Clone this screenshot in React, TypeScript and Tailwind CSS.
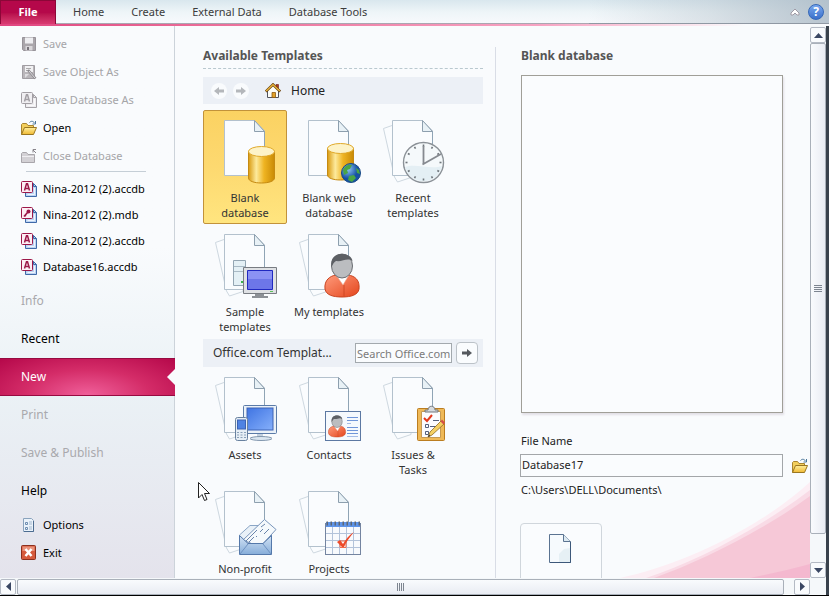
import { useState, type ReactNode } from "react";

interface Template {
  label: string;
  art: ReactNode;
}

const TABS = ["Home", "Create", "External Data", "Database Tools"];

function Page({ stacked = true }: { stacked?: boolean }) {
  return (
    <>
      {stacked && <path d="M11 5.5L2.5 8.5L13.5 57L16.5 62L30 57.5V10Z" fill="#fafcfe" stroke="#ced8e0" />}
      <path d="M11.5 .5H41.5L51.5 11V55.5H11.5Z" fill="#fafcfe" stroke="#b3c1cd" />
      <path d="M51.5 11V55" stroke="#8fa4b5" />
      <path d="M41.5 .5V11.5H51.5Z" fill="#e8f1f6" stroke="#8d9fae" />
    </>
  );
}

function Cylinder({ x, y }: { x: number; y: number }) {
  return (
    <g transform={`translate(${x} ${y})`}>
      <path d="M.5 5V32C.5 35 6 37 13.5 37S26.5 35 26.5 32V5Z" fill="url(#gold)" stroke="#c58a12" />
      <ellipse cx="13.5" cy="5.5" rx="13" ry="5" fill="#fdf3c8" stroke="#e0a92a" />
    </g>
  );
}

function Person({ x, y, scale = 1 }: { x: number; y: number; scale?: number }) {
  return (
    <g transform={`translate(${x} ${y}) scale(${scale})`}>
      <path d="M1 36C0 27 6 23 12 22L18 25L24 22C31 23 36 27 35 36C34 42 27 44 18 44S2 42 1 36Z" fill="url(#shirt)" stroke="#c9431f" />
      <path d="M12 22L19 32L25 22Z" fill="#fff" stroke="#e9a58d" strokeWidth=".6" />
      <path d="M20 32V43" stroke="#c9431f" strokeWidth=".8" />
      <ellipse cx="18" cy="13" rx="10.5" ry="12" fill="#bbbdc0" stroke="#6a6d72" />
      <path d="M7.5 14C6 5 11 1 18 1C24 1 28 4 28.5 8C23 4 19 9 12 8C10 9 9 11 7.5 14Z" fill="#5d6065" />
    </g>
  );
}

function Defs() {
  return (
    <svg className="absolute size-0" aria-hidden="true">
      <defs>
        <linearGradient id="gold">
          <stop offset="0" stopColor="#d99a10" />
          <stop offset=".3" stopColor="#fdea9c" />
          <stop offset=".6" stopColor="#efb422" />
          <stop offset="1" stopColor="#c98a05" />
        </linearGradient>
        <linearGradient id="shirt" x1="0" x2="1" y2="1">
          <stop offset="0" stopColor="#ff9b7c" />
          <stop offset="1" stopColor="#e4451c" />
        </linearGradient>
        <linearGradient id="screen" x2="1" y2="1">
          <stop offset="0" stopColor="#3f74e2" />
          <stop offset="1" stopColor="#86b0fb" />
        </linearGradient>
        <linearGradient id="folder" x2="0" y2="1">
          <stop offset="0" stopColor="#ffef9e" />
          <stop offset="1" stopColor="#f0b932" />
        </linearGradient>
        <linearGradient id="envelope" x2="0" y2="1">
          <stop offset="0" stopColor="#d3e3f5" />
          <stop offset="1" stopColor="#86add9" />
        </linearGradient>
        <radialGradient id="globe" cx=".35" cy=".3">
          <stop offset="0" stopColor="#8fc6f4" />
          <stop offset="1" stopColor="#1551a4" />
        </radialGradient>
      </defs>
    </svg>
  );
}

function Art({ children }: { children: ReactNode }) {
  return (
    <svg width="64" height="64" viewBox="0 0 64 64" fill="none" aria-hidden="true">
      {children}
    </svg>
  );
}

const clockTicks = [0, 30, 60, 90, 120, 150, 180, 210, 240, 270, 300, 330];

const localTemplates: Template[] = [
  {
    label: "Blank database",
    art: (
      <Art>
        <Page stacked={false} />
        <Cylinder x={35} y={26} />
      </Art>
    ),
  },
  {
    label: "Blank web database",
    art: (
      <Art>
        <Page stacked={false} />
        <Cylinder x={30} y={23} />
        <circle cx="54" cy="53" r="9.5" fill="url(#globe)" stroke="#174a86" />
        <path d="M46 50C48 45 52 44 55 45L53 49L50 50L51 53L47 55ZM52 56L57 55L59 58L55 62L51 60ZM59 48L62 50L63 54L60 53Z" fill="#4aa545" />
      </Art>
    ),
  },
  {
    label: "Recent templates",
    art: (
      <Art>
        <Page />
        <circle cx="42.5" cy="42.5" r="20" fill="#f5f9fb" stroke="#8b9197" strokeWidth="1.4" />
        <path d="M24 47C34 43 50 50 61 46A19 19 0 0 1 24 47Z" fill="#e4eff4" />
        {clockTicks.map((angle) => (
          <path key={angle} d="M42.5 24.5V26.5" stroke="#6f757b" strokeWidth="1.6" transform={`rotate(${angle} 42.5 42.5)`} />
        ))}
        <path d="M42.5 26V44M41.5 44.5L60 34" stroke="#868a90" strokeWidth="1.8" />
      </Art>
    ),
  },
  {
    label: "Sample templates",
    art: (
      <Art>
        <Page />
        <path d="M20.5 26.5H32.5V51.5H20.5Z" fill="#e4f0f5" stroke="#93a5b2" />
        <path d="M21 32.5H32M21 37.5H32" stroke="#a9bac5" />
        <path d="M28 48H31" stroke="#39b54a" strokeWidth="2" />
        <path d="M30.5 33.5H63.5V59.5H30.5Z" fill="#dfe1e4" stroke="#787c82" />
        <path d="M34.5 36.5H59.5V55.5H34.5Z" fill="#6d76e8" stroke="#2028c0" />
        <path d="M35 37H59V45H35Z" fill="#8b92f4" />
        <path d="M42 60H51V62H42ZM39 62H55V64H39Z" fill="#8c9096" />
        <path d="M57 57.5H60" stroke="#5cc05c" />
      </Art>
    ),
  },
  {
    label: "My templates",
    art: (
      <Art>
        <Page />
        <Person x={27} y={19} />
      </Art>
    ),
  },
];

const onlineTemplates: Template[] = [
  {
    label: "Assets",
    art: (
      <Art>
        <Page />
        <rect x="30.5" y="28.5" width="33" height="28" rx="1" fill="#eaf1f8" stroke="#5b7ba8" />
        <rect x="34" y="31" width="26" height="22" fill="url(#screen)" stroke="#3c62b4" />
        <path d="M44 57H50V61H44Z" fill="#c3d0de" />
        <ellipse cx="48" cy="61.5" rx="11" ry="2" fill="#dbe6f0" stroke="#8297ae" />
        <rect x="22.5" y="40.5" width="12" height="23" rx="2" fill="#e6eef5" stroke="#68819f" />
        <rect x="24.5" y="43" width="8" height="9" fill="#4f83e3" stroke="#3c62b4" />
        <path d="M24 55.5H33M24 58H33M24 60.5H33" stroke="#8aa0b8" strokeDasharray="2 1.5" />
      </Art>
    ),
  },
  {
    label: "Contacts",
    art: (
      <Art>
        <Page />
        <rect x="28.5" y="34.5" width="35" height="29" fill="#f5f9fd" stroke="#5c78a2" />
        <Person x={31} y={38} scale={0.5} />
        <path d="M50 40.5H61M50 43.5H61M50 50.5H61M50 53.5H61M50 56.5H61" stroke="#6f95d8" />
        <path d="M50 46.5H54M50 59.5H61" stroke="#a4bce6" />
      </Art>
    ),
  },
  {
    label: "Issues & Tasks",
    art: (
      <Art>
        <Page />
        <rect x="36.5" y="31.5" width="27" height="32" rx="1" fill="#efb958" stroke="#bb7d20" />
        <path d="M40.5 34.5H59.5V60.5H40.5Z" fill="#fbfcfe" stroke="#c69a53" />
        <path d="M44 35V33H47C47 28 54 28 54 33H57V35Z" fill="#d6dade" stroke="#73777c" />
        <path d="M43 41L46 44L51 38" stroke="#e2391d" strokeWidth="2" />
        <path d="M52 43.5H58M49 49.5H55" stroke="#55617c" />
        <path d="M44.5 47.5H47.5V50.5H44.5ZM44.5 54.5H47.5V57.5H44.5Z" stroke="#55617c" />
        <path d="M47 60L49 55L60 44L63 47L51 58Z" fill="#f4d063" stroke="#8e6a23" strokeWidth=".8" />
        <path d="M59.5 44.5L61 42.5L64 45.5L62.5 47.5Z" fill="#d65048" />
        <path d="M47 60L48 57.5L49.5 59Z" fill="#333" />
      </Art>
    ),
  },
  {
    label: "Non-profit",
    art: (
      <Art>
        <Page />
        <path d="M26.5 44L37 34.5H48L58.5 44V52H26.5Z" fill="#e9f1f8" stroke="#8ba6c6" />
        <path d="M30 49L51.5 28.5L63 38.5L47 56Z" fill="#f5f9fc" stroke="#7995bb" />
        <path d="M33 50L44 39M36 51L41 46M48 36L52 33M47 41L50 38M51 43L56 38M43 46L44 45" stroke="#6883aa" />
        <path d="M26.5 44.5L35 52.5H50L58.5 44.5V63.5H26.5Z" fill="url(#envelope)" stroke="#5478aa" />
        <path d="M27 63L35 53M58 63L50 53" stroke="#6e92c2" />
      </Art>
    ),
  },
  {
    label: "Projects",
    art: (
      <Art>
        <Page />
        <rect x="28.5" y="32.5" width="35" height="31" fill="#f8fafd" stroke="#7484a0" />
        <path d="M29 31H63V36H29Z" fill="#5e94e8" />
        <path d="M29.5 32.5H63" stroke="#5d6673" strokeWidth="4" strokeDasharray="1.5 2.5" />
        <path d="M29 42.5H63M29 49.5H63M29 56.5H63M35.5 36V63M42.5 36V63M49.5 36V63M56.5 36V63" stroke="#b3c3da" />
        <path d="M43 50H49V56.5H43Z" stroke="#ee6b4c" />
        <path d="M40 51L43 49L46 53C49 48 52 44 57 41C53 46 49 51 47 56H45Z" fill="#ee4a29" />
      </Art>
    ),
  },
];

function SmallIcon({ children }: { children: ReactNode }) {
  return (
    <svg className="shrink-0" width="16" height="16" viewBox="0 0 16 16" fill="none" aria-hidden="true">
      {children}
    </svg>
  );
}

function SaveIcon() {
  return (
    <SmallIcon>
      <path d="M1.5 1.5H14.5V14.5H2.5L1.5 13.5Z" fill="#aaa6ab" stroke="#979399" />
      <path d="M4 1.5H12V7.5H4Z" fill="#eeeef1" />
      <path d="M4.5 10H11.5V14.5H4.5Z" fill="#d9d7da" />
      <path d="M6 11H8V14H6Z" fill="#77737a" />
    </SmallIcon>
  );
}

function SaveObjectIcon() {
  return (
    <SmallIcon>
      <path d="M1.5 1.5H13.5V14.5H1.5Z" fill="#b9b6ba" stroke="#a09da2" />
      <path d="M4 2H12V8H4Z" fill="#f1f1f3" />
      <path d="M5 4.5H10M5 6.5H8" stroke="#aaa" />
      <path d="M4 14V10H8" fill="#dedde0" />
      <path d="M7 6L14.5 14.5" stroke="#8e8b90" strokeWidth="2.5" />
      <path d="M8 7L14 14" stroke="#dddce0" />
    </SmallIcon>
  );
}

function AccessIcon({ muted = false, legacy = false }: { muted?: boolean; legacy?: boolean }) {
  const sheet = muted ? "#a5a2a7" : "#3f69a8";
  const badge = muted ? "#a29fa4" : "#9c1849";
  return (
    <SmallIcon>
      <path d="M8.5 2.5H12.5L15.5 5.5V15.5H4.5V11" fill={muted ? "#eeedf0" : "#bcd4f3"} stroke={sheet} />
      <path d="M12.5 2.5V5.5H15.5" stroke={sheet} />
      <path d="M6.5 13.5H13.5V7" stroke={muted ? "#fafafb" : "#eef5fd"} />
      <rect x=".5" y=".5" width="11" height="11" rx="1" fill={muted ? "#f0eff2" : "#fdeff5"} stroke={badge} />
      {legacy ? (
        <>
          <circle cx="7.5" cy="4.5" r="2" fill={badge} />
          <path d="M6.5 5.5L3 9.5M3.5 8L5 9" stroke={badge} strokeWidth="1.6" />
        </>
      ) : (
        <path d="M3.5 9.5L5.5 2.8H6.5L8.5 9.5M4 7.5H8" stroke={badge} strokeWidth="1.5" />
      )}
    </SmallIcon>
  );
}

function OpenIcon() {
  return (
    <SmallIcon>
      <path d="M.5 14.5V4.5L1.5 3.5H5.5L7 5.5H12.5V8" fill="#f3cf5c" stroke="#a9842e" />
      <path d="M.5 14.5L3.5 7.5H15.5L12.5 14.5Z" fill="url(#folder)" stroke="#9a7620" />
      <path d="M8.5 2.5C10 .8 12 .8 13.5 3M14.5 1V4H11.5" stroke="#4a7699" />
    </SmallIcon>
  );
}

function CloseDatabaseIcon() {
  return (
    <SmallIcon>
      <path d="M.5 14.5V5.5L1.5 4.5H5.5L7 6.5H13.5V14.5Z" fill="#d3d1d5" stroke="#a9a6ab" />
      <path d="M1 8.5H13" stroke="#f0eff2" />
      <path d="M15 5L12 2M12 4.5V1.5H15" stroke="#88848b" />
    </SmallIcon>
  );
}

function OptionsIcon() {
  return (
    <SmallIcon>
      <path d="M2.5 1.5H10.5L12.5 3.5V14.5H2.5Z" fill="#eaf2fa" stroke="#8aa3bd" />
      <path d="M12.5 4V14.5H3" stroke="#4c6c90" />
      <path d="M4.5 5.5H6.5V7.5H4.5ZM4.5 10.5H6.5V12.5H4.5Z" stroke="#6d8cb0" />
      <path d="M8 5H11M8 7H11M8 10H11M8 12H11" stroke="#a3b8cf" />
    </SmallIcon>
  );
}

function ExitIcon() {
  return (
    <SmallIcon>
      <rect x=".5" y=".5" width="14" height="14" rx="1" fill="#d65a3c" stroke="#8c2f1d" />
      <path d="M1.5 1.5H13.5V6H1.5Z" fill="#e9917a" />
      <path d="M4.5 4L10.5 11M10.5 4L4.5 11" stroke="#fff" strokeWidth="2.5" />
    </SmallIcon>
  );
}

function HomeIcon() {
  return (
    <SmallIcon>
      <path d="M11 1.5H13.5V6H11Z" fill="#b03a22" stroke="#6c2415" strokeWidth=".6" />
      <path d="M2.5 7V14.5H13.5V7L8 2Z" fill="#fdfdf6" stroke="#50535b" />
      <path d="M7 9.5H10.5V14.5H7Z" fill="#e3a126" stroke="#8b5a14" strokeWidth=".8" />
      <path d="M.8 8.5L8 1.5L15.2 8.5" stroke="#6a4513" strokeWidth="2.6" />
      <path d="M1.2 8L8 1.5L14.8 8" stroke="#f0b93a" strokeWidth="1.2" />
    </SmallIcon>
  );
}

function ArrowGlyph({ direction, className }: { direction: "left" | "right"; className: string }) {
  return (
    <svg width="10" height="8" viewBox="0 0 10 8" className={className} aria-hidden="true">
      <path
        d={direction === "left" ? "M0 4L5 0V2.5H10V5.5H5V8Z" : "M10 4L5 0V2.5H0V5.5H5V8Z"}
        fill="currentColor"
      />
    </svg>
  );
}

const commands = [
  { label: "Save", icon: <SaveIcon />, disabled: true },
  { label: "Save Object As", icon: <SaveObjectIcon />, disabled: true },
  { label: "Save Database As", icon: <AccessIcon muted />, disabled: true },
  { label: "Open", icon: <OpenIcon />, disabled: false },
  { label: "Close Database", icon: <CloseDatabaseIcon />, disabled: true },
];

const recentFiles = [
  { name: "Nina-2012 (2).accdb", legacy: false },
  { name: "Nina-2012 (2).mdb", legacy: true },
  { name: "Nina-2012 (2).accdb", legacy: false },
  { name: "Database16.accdb", legacy: false },
];

const places = [
  { label: "Info", disabled: true },
  { label: "Recent", disabled: false },
  { label: "New", disabled: false },
  { label: "Print", disabled: true },
  { label: "Save & Publish", disabled: true },
  { label: "Help", disabled: false },
];

function Ribbon() {
  return (
    <header className="shrink-0">
      <div className="flex h-6 items-stretch bg-linear-to-b from-[#d9e7ee] via-[#eef5f8] to-[#f8fafd]">
        <button className="w-14 border border-b-0 border-[#8c0738] bg-linear-to-b from-[#b5084a] from-50% to-[#d93a72] text-[11px] font-bold text-white">
          File
        </button>
        <nav className="flex flex-1 items-center gap-[27px] border-b border-[#aaa6b1] pt-px pl-[17px] text-[11px] text-[#3c3c3c]">
          {TABS.map((tab) => (
            <button key={tab}>{tab}</button>
          ))}
        </nav>
        <div className="flex w-60 items-center justify-end gap-2 border-b border-[#8f98a3] bg-linear-to-r from-[#b4c1cb]/0 via-[#b4c1cb]/40 to-[#a9b8c4]/80 pr-[5px]">
          <button aria-label="Minimize the Ribbon">
            <svg width="10" height="8" viewBox="0 0 10 8" aria-hidden="true">
              <path d="M1 5L5 1L9 5V7H7L5 5L3 7H1Z" fill="#fff" stroke="#a09ba6" />
            </svg>
          </button>
          <button
            aria-label="Help"
            className="size-4 rounded-full border border-[#3568b8] bg-linear-to-b from-[#79a8ee] to-[#3a6fca] text-xs leading-none font-bold text-white"
          >
            ?
          </button>
        </div>
      </div>
      <div className="h-0.5 bg-linear-to-r from-[#e0447f] via-[#f7a3c2] via-65% to-[#f9fbfd] to-90%" />
    </header>
  );
}

function Sidebar() {
  const [place, setPlace] = useState("New");

  return (
    <aside className="flex w-[175px] shrink-0 flex-col border-r border-[#ccd3da] bg-linear-to-b from-[#f9fbfd] from-40% via-[#ebf2f6] via-65% to-[#e4e3ec] pt-1 text-[11px]">
      {commands.map(({ label, icon, disabled }) => (
        <button
          key={label}
          disabled={disabled}
          className="flex h-7 shrink-0 items-center gap-1.5 pl-[21px] text-black disabled:text-[#a5a5a8]"
        >
          {icon}
          {label}
        </button>
      ))}
      <hr className="mt-px mr-7 mb-1 ml-[26px] border-[#c5ced6]" />
      {recentFiles.map((file, i) => (
        <button key={i} className="flex h-[26px] shrink-0 items-center gap-1.5 pl-[21px] text-black">
          <AccessIcon legacy={file.legacy} />
          {file.name}
        </button>
      ))}
      <nav className="mt-0.5 mb-px flex shrink-0 flex-col text-xs">
        {places.map(({ label, disabled }) => (
          <button
            key={label}
            disabled={disabled}
            onClick={() => setPlace(label)}
            className={
              label === place
                ? "-mr-px flex h-[38px] items-center justify-between border-y border-[#970a40] bg-[radial-gradient(ellipse_at_bottom,#f0609a,#d42c68_50%,#b5084a)] pl-[21px] text-white"
                : "flex h-[38px] items-center pl-[21px] text-black disabled:text-[#a9a9ad]"
            }
          >
            {label}
            {label === place && (
              <svg width="8" height="16" viewBox="0 0 8 16" aria-hidden="true">
                <path d="M8 0L0 8L8 16Z" fill="#f9fbfd" />
              </svg>
            )}
          </button>
        ))}
      </nav>
      <button className="flex h-7 shrink-0 items-center gap-1.5 pl-[21px] text-black">
        <OptionsIcon />
        Options
      </button>
      <button className="flex h-7 shrink-0 items-center gap-1.5 pl-[21px] text-black">
        <ExitIcon />
        Exit
      </button>
    </aside>
  );
}

interface TemplateGridProps {
  templates: Template[];
  selected: string;
  onSelect: (label: string) => void;
}

function TemplateGrid({ templates, selected, onSelect }: TemplateGridProps) {
  return (
    <div className="flex flex-wrap">
      {templates.map(({ label, art }) => (
        <button
          key={label}
          onClick={() => onSelect(label)}
          className={`flex h-[114px] w-[84px] flex-col items-center gap-1.5 rounded-xs border px-1 pt-[9px] text-[11px] leading-[15px] text-[#333] ${
            label === selected
              ? "border-[#c2923a] bg-linear-to-b from-[#fbd262] via-[#fdd970] to-[#ffe57f]"
              : "border-transparent"
          }`}
        >
          {art}
          <span>{label}</span>
        </button>
      ))}
    </div>
  );
}

function Templates() {
  const [selected, setSelected] = useState("Blank database");

  return (
    <section className="min-w-0 flex-1 overflow-hidden pt-[21px] pr-3 pl-7">
      <h2 className="border-b border-dashed border-[#b9c8cf] pb-1 text-xs leading-[17px] font-bold text-[#555]">
        Available Templates
      </h2>
      <div className="mt-2 mb-1.5 flex h-[27px] items-center bg-[#ecf0f6] pl-2">
        <button aria-label="Back" className="flex size-4 items-center justify-center rounded-full bg-[#f9fbfd]">
          <ArrowGlyph direction="left" className="text-[#b4b7bb]" />
        </button>
        <button aria-label="Forward" className="ml-1.5 flex size-4 items-center justify-center rounded-full bg-[#f9fbfd]">
          <ArrowGlyph direction="right" className="text-[#b4b7bb]" />
        </button>
        <button className="ml-4 flex items-center gap-2.5 text-xs text-[#222]">
          <HomeIcon />
          Home
        </button>
      </div>
      <TemplateGrid templates={localTemplates} selected={selected} onSelect={setSelected} />
      <form className="mt-px flex h-7 items-center bg-[#ecf0f6] pr-[5px] pl-2.5" onSubmit={(e) => e.preventDefault()}>
        <label htmlFor="search" className="flex-1 truncate text-xs text-[#333]">
          Office.com Templat...
        </label>
        <input
          id="search"
          placeholder="Search Office.com for templates"
          className="h-5 w-[97px] border border-[#a3a9ae] bg-[#fafcfe] px-px text-[11px] placeholder:text-[#7b7b7b]"
        />
        <button
          aria-label="Search"
          className="ml-1 flex size-[22px] items-center justify-center rounded-sm border border-[#bcc2c8] bg-[#fafcfe]"
        >
          <ArrowGlyph direction="right" className="text-[#55595e]" />
        </button>
      </form>
      <TemplateGrid templates={onlineTemplates} selected={selected} onSelect={setSelected} />
    </section>
  );
}

function DetailPane() {
  const [fileName, setFileName] = useState("Database17");

  return (
    <section className="relative w-[314px] shrink-0 overflow-hidden pt-[21px] pl-6">
      <svg className="absolute right-0 bottom-0" width="200" height="96" viewBox="0 0 200 96" aria-hidden="true">
        <path d="M10 96C70 84 150 46 200 0V96Z" fill="#fceef4" />
        <path d="M36 96C86 80 150 46 200 8V96Z" fill="#f9dbe6" />
        <path d="M44 96C90 80 154 48 200 14V96Z" fill="#f6c8d7" />
        <path d="M140 96C160 92 182 87 200 82V96Z" fill="#f4b8cf" />
      </svg>
      <div className="relative">
        <h2 className="pl-px text-xs leading-[17px] font-bold text-[#555]">Blank database</h2>
        <div className="mt-[11px] mr-[27px] ml-px h-[338px] border border-[#a09f98] bg-[#fafcfe] shadow-[1px_2px_2px_#e2dfe6]" />
        <label htmlFor="file-name" className="mt-5 block pl-px text-[11px] leading-4 text-[#222]">
          File Name
        </label>
        <div className="mt-[5px] flex items-center gap-[9px]">
          <input
            id="file-name"
            value={fileName}
            onChange={(e) => setFileName(e.target.value)}
            className="h-[23px] min-w-0 flex-1 border border-[#a3a6a9] bg-[#fafcfe] px-px pb-0.5 text-[11px] text-[#222]"
          />
          <button aria-label="Browse" className="pr-0.5">
            <OpenIcon />
          </button>
        </div>
        <p className="mt-[5px] pl-px text-[11px] leading-4 text-[#222]">C:\Users\DELL\Documents\</p>
        <button
          aria-label="Create"
          className="mt-[25px] flex h-20 w-[82px] justify-center rounded-sm border border-[#d0d6dc] bg-[#fafcfe] pt-2.5"
        >
          <svg width="24" height="30" viewBox="0 0 24 30" fill="none" aria-hidden="true">
            <path d="M.5 .5H14.5L21.5 7.5V28.5H.5Z" fill="#f6fafd" stroke="#5a7391" />
            <path d="M10 28V20L15 15L21 14V28Z" fill="#e6f0f5" />
            <path d="M14.5 .5V7.5H21.5" fill="#dce9f1" stroke="#5a7391" />
            <path d="M21.5 8V28.5H1" stroke="#3d587a" />
          </svg>
        </button>
      </div>
    </section>
  );
}

function Triangle({ points }: { points: string }) {
  return (
    <svg width="9" height="9" viewBox="0 0 9 9" aria-hidden="true">
      <polygon points={points} fill="#3a4763" />
    </svg>
  );
}

const stepButton = "flex size-4 shrink-0 items-center justify-center rounded-xs border border-[#b4bac4] bg-[#f9fbfd]";

function VerticalScrollbar() {
  return (
    <div className="flex w-4 shrink-0 flex-col bg-[#f5f8fa] pt-px">
      <button aria-label="Scroll up" className={stepButton}>
        <Triangle points="0,7 4.5,2 9,7" />
      </button>
      <div className="flex flex-1 flex-col items-center justify-center gap-px rounded-xs border border-[#a9b0b9] bg-linear-to-r from-[#f9fbfd] to-[#e9ecf3]">
        <span className="h-px w-2 bg-[#7d8590]" />
        <span className="h-px w-2 bg-[#7d8590]" />
        <span className="h-px w-2 bg-[#7d8590]" />
        <span className="h-px w-2 bg-[#7d8590]" />
      </div>
      <button aria-label="Scroll down" className={`mt-7 ${stepButton}`}>
        <Triangle points="0,2 9,2 4.5,7" />
      </button>
    </div>
  );
}

function HorizontalScrollbar() {
  return (
    <div className="flex h-[17px] shrink-0 items-center bg-[#f5f8fa] pr-4">
      <button aria-label="Scroll left" className={stepButton}>
        <Triangle points="7,0 7,9 2,4.5" />
      </button>
      <div className="ml-px flex h-4 flex-1 items-center justify-center gap-px rounded-xs border border-[#a9b0b9] bg-linear-to-b from-[#f9fbfd] to-[#e9ecf3]">
        <span className="h-2 w-px bg-[#7d8590]" />
        <span className="h-2 w-px bg-[#7d8590]" />
        <span className="h-2 w-px bg-[#7d8590]" />
        <span className="h-2 w-px bg-[#7d8590]" />
      </div>
      <button aria-label="Scroll right" className={`ml-2.5 ${stepButton}`}>
        <Triangle points="2,0 7,4.5 2,9" />
      </button>
    </div>
  );
}

function Pointer() {
  return (
    <svg className="absolute top-[482px] left-[198px]" width="13" height="20" viewBox="0 0 13 20" aria-hidden="true">
      <path d="M.5 .5V16L4 12.5L6.5 18.5L9 17.5L6.5 11.5H11.5Z" fill="#fff" stroke="#222" />
    </svg>
  );
}

export default function App() {
  return (
    <div className="relative flex h-screen flex-col overflow-hidden border-b border-black bg-[#f9fbfd] font-['Noto_Sans','Open_Sans',sans-serif]">
      <Defs />
      <Ribbon />
      <div className="flex min-h-0 flex-1 flex-col border-r-3 border-[#39424c]">
        <div className="flex min-h-0 flex-1">
          <Sidebar />
          <Templates />
          <div className="mt-[21px] w-px shrink-0 bg-[#d9dde6]" />
          <DetailPane />
          <VerticalScrollbar />
        </div>
        <HorizontalScrollbar />
      </div>
      <Pointer />
    </div>
  );
}
